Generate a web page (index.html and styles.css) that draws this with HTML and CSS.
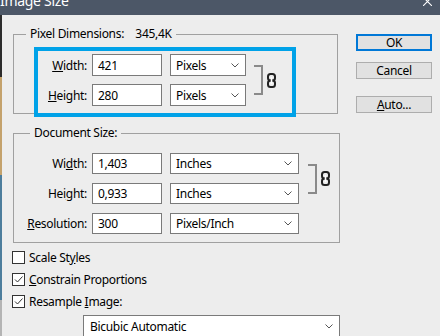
FILE: index.html
```html
<!DOCTYPE html>
<html lang="en">
<head>
  <meta charset="UTF-8">
  <title>Image Size</title>
  <link rel="stylesheet" href="styles.css">
</head>
<body>
  <div class="titlebar">
    <span class="title">Image Size</span>
    <svg class="close" viewBox="0 0 10 10"><path d="M0 0 L10 10 M10 0 L0 10" stroke="#fff" stroke-width="1.2"/></svg>
  </div>

  <div class="frame">
    <div class="desk-edge"></div>
    <div class="dialog">
      <div class="main">
        <fieldset class="group group-pixels">
          <legend>Pixel Dimensions:&nbsp;&nbsp;&nbsp; 345,4K</legend>
          <div class="highlight">
            <div class="rows rows-pixels">
              <label class="lbl"><u>W</u>idth:</label>
              <div class="field">421</div>
              <div class="select sel-pixels">Pixels<svg class="arrow" viewBox="0 0 8 5"><path d="M0.5 0.5 L4 4 L7.5 0.5" fill="none" stroke="#555"/></svg></div>
              <div class="link">
                <div class="bracket"></div>
                <svg class="chain" viewBox="0 0 9 15"><rect x="1" y="1" width="7" height="6.5" rx="2.5" fill="none" stroke="#222" stroke-width="2"/><rect x="1" y="7.5" width="7" height="6.5" rx="2.5" fill="none" stroke="#222" stroke-width="2"/><path d="M4.5 4 V11" stroke="#fff" stroke-width="1.6"/></svg>
              </div>
              <label class="lbl"><u>H</u>eight:</label>
              <div class="field">280</div>
              <div class="select sel-pixels">Pixels<svg class="arrow" viewBox="0 0 8 5"><path d="M0.5 0.5 L4 4 L7.5 0.5" fill="none" stroke="#555"/></svg></div>
            </div>
          </div>
        </fieldset>

        <fieldset class="group group-doc">
          <legend>Document Size:</legend>
          <div class="rows rows-doc">
            <label class="lbl">Wi<u>d</u>th:</label>
            <div class="field">1,403</div>
            <div class="select sel-doc">Inches<svg class="arrow" viewBox="0 0 8 5"><path d="M0.5 0.5 L4 4 L7.5 0.5" fill="none" stroke="#555"/></svg></div>
            <div class="link">
              <div class="bracket"></div>
              <svg class="chain" viewBox="0 0 9 15"><rect x="1" y="1" width="7" height="6.5" rx="2.5" fill="none" stroke="#222" stroke-width="2"/><rect x="1" y="7.5" width="7" height="6.5" rx="2.5" fill="none" stroke="#222" stroke-width="2"/><path d="M4.5 4 V11" stroke="#fff" stroke-width="1.6"/></svg>
            </div>
            <label class="lbl">Hei<u>g</u>ht:</label>
            <div class="field">0,933</div>
            <div class="select sel-doc">Inches<svg class="arrow" viewBox="0 0 8 5"><path d="M0.5 0.5 L4 4 L7.5 0.5" fill="none" stroke="#555"/></svg></div>
            <label class="lbl"><u>R</u>esolution:</label>
            <div class="field">300</div>
            <div class="select sel-doc">Pixels/Inch<svg class="arrow" viewBox="0 0 8 5"><path d="M0.5 0.5 L4 4 L7.5 0.5" fill="none" stroke="#555"/></svg></div>
          </div>
        </fieldset>

        <div class="options">
          <div class="option"><span class="box"></span><span>Scale St<u>y</u>les</span></div>
          <div class="option"><span class="box"><svg viewBox="0 0 11 11"><path d="M2 5.5 L4.5 8 L9.5 2.5" fill="none" stroke="#333"/></svg></span><span><u>C</u>onstrain Proportions</span></div>
          <div class="option"><span class="box"><svg viewBox="0 0 11 11"><path d="M2 5.5 L4.5 8 L9.5 2.5" fill="none" stroke="#333"/></svg></span><span>Resample <u>I</u>mage:</span></div>
        </div>

        <div class="select sel-resample">Bicubic Automatic<svg class="arrow" viewBox="0 0 8 5"><path d="M0.5 0.5 L4 4 L7.5 0.5" fill="none" stroke="#555"/></svg></div>
      </div>

      <div class="buttons">
        <div class="btn btn-default">OK</div>
        <div class="btn btn-cancel">Cancel</div>
        <div class="btn btn-auto"><u>A</u>uto...</div>
      </div>
    </div>
  </div>
</body>
</html>
```

FILE: styles.css
```css
* {
  box-sizing: border-box;
}

html,
body {
  margin: 0;
}

body {
  width: 440px;
  height: 336px;
  overflow: hidden;
  background-color: #ededed;
  font-family: "Noto Sans", "Open Sans", sans-serif;
  font-size: 12px;
  letter-spacing: -0.3px;
  color: #000;
}

u {
  text-underline-offset: 1px;
}

.titlebar {
  height: 15px;
  background-color: #4c5767;
  display: flex;
  justify-content: space-between;
  overflow: hidden;
}

.title {
  color: #fff;
  font-size: 14px;
  line-height: 14px;
  margin-top: -6px;
}

.close {
  width: 9px;
  height: 9px;
  margin: -3px 8px 0 0;
}

.frame {
  display: flex;
  height: 321px;
}

.desk-edge {
  width: 2px;
  background: linear-gradient(#2c2c2c 0, #2c2c2c 62px, #c4a26c 62px, #c4a26c 160px, #4d7d9c 160px, #4d7d9c 285px, #b4b4b4 285px);
}

.dialog {
  flex: 1;
  display: flex;
  padding: 11px 0 0 11px;
}

.main {
  width: 327px;
}

.group {
  margin: 0;
  padding: 0;
  border: 1px solid #a0a0a0;
}

.group legend {
  margin-left: 12px;
  padding: 0 4px;
  line-height: 16px;
}

.group-pixels {
  width: 325px;
  padding-top: 5px;
}

.group-doc {
  width: 327px;
  margin-top: 11px;
  padding: 12px 0 8px 0;
}

.group-doc legend {
  margin-left: 16px;
}

.highlight {
  width: 262px;
  margin: 0 0 -4px 20px;
  padding: 3px 0 7px 0;
  border: 4px solid #00a2e8;
}

.rows {
  display: grid;
  align-items: center;
}

.rows-pixels {
  grid-template-columns: 54px 78px 84px auto;
  grid-auto-rows: 22px;
  row-gap: 8px;
}

.rows-doc {
  grid-template-columns: 78px 78px 138px auto;
  grid-auto-rows: 21px;
  row-gap: 9px;
}

.lbl {
  text-align: right;
  padding-right: 5px;
  white-space: nowrap;
}

.field,
.select {
  height: 100%;
  display: flex;
  align-items: center;
  padding-left: 5px;
  background-color: #fff;
  border: 1px solid #7a7a7a;
}

.field {
  width: 70px;
}

.select {
  justify-content: space-between;
  padding-right: 6px;
}

.sel-pixels {
  width: 76px;
}

.sel-doc {
  width: 129px;
}

.arrow {
  width: 8px;
  height: 5px;
}

.link {
  grid-column: 4;
  grid-row: 1 / span 2;
  display: flex;
  align-items: center;
  gap: 4px;
}

.bracket {
  width: 9px;
  height: 30px;
  border: 2px solid #8a8a8a;
  border-left: none;
}

.chain {
  width: 9px;
  height: 15px;
}

.options {
  margin: 8px 0 0 -1px;
  display: flex;
  flex-direction: column;
  gap: 9px;
}

.option {
  display: flex;
  align-items: center;
  gap: 4px;
  height: 13px;
}

.box {
  width: 13px;
  height: 13px;
  border: 1px solid #333;
  background-color: #fff;
  display: flex;
}

.box svg {
  width: 11px;
  height: 11px;
}

.sel-resample {
  width: 257px;
  height: 22px;
  margin: 7px 0 0 70px;
  padding-left: 6px;
}

.buttons {
  width: 76px;
  margin-left: 16px;
  padding-top: 8px;
  display: flex;
  flex-direction: column;
}

.btn {
  height: 17px;
  line-height: 15px;
  text-align: center;
  background-color: #e1e1e1;
  border: 1px solid #adadad;
}

.btn-default {
  border: 2px solid #0078d7;
  line-height: 13px;
}

.btn-cancel {
  margin-top: 11px;
}

.btn-auto {
  margin-top: 17px;
}
```
